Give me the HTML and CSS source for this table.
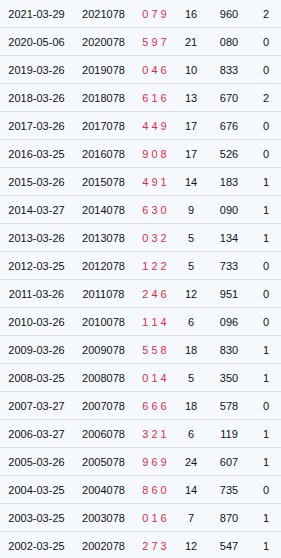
FILE: index.html
```html
<!DOCTYPE html>
<html>
<head>
<meta charset="utf-8">
<link rel="stylesheet" href="styles.css">
</head>
<body>
<div class="list">
  <div class="row"><span>2021-03-29</span><span>2021078</span><span class="balls">0 7 9</span><span>16</span><span>960</span><span>2</span></div>
  <div class="row"><span>2020-05-06</span><span>2020078</span><span class="balls">5 9 7</span><span>21</span><span>080</span><span>0</span></div>
  <div class="row"><span>2019-03-26</span><span>2019078</span><span class="balls">0 4 6</span><span>10</span><span>833</span><span>0</span></div>
  <div class="row"><span>2018-03-26</span><span>2018078</span><span class="balls">6 1 6</span><span>13</span><span>670</span><span>2</span></div>
  <div class="row"><span>2017-03-26</span><span>2017078</span><span class="balls">4 4 9</span><span>17</span><span>676</span><span>0</span></div>
  <div class="row"><span>2016-03-25</span><span>2016078</span><span class="balls">9 0 8</span><span>17</span><span>526</span><span>0</span></div>
  <div class="row"><span>2015-03-26</span><span>2015078</span><span class="balls">4 9 1</span><span>14</span><span>183</span><span>1</span></div>
  <div class="row"><span>2014-03-27</span><span>2014078</span><span class="balls">6 3 0</span><span>9</span><span>090</span><span>1</span></div>
  <div class="row"><span>2013-03-26</span><span>2013078</span><span class="balls">0 3 2</span><span>5</span><span>134</span><span>1</span></div>
  <div class="row"><span>2012-03-25</span><span>2012078</span><span class="balls">1 2 2</span><span>5</span><span>733</span><span>0</span></div>
  <div class="row"><span>2011-03-26</span><span>2011078</span><span class="balls">2 4 6</span><span>12</span><span>951</span><span>0</span></div>
  <div class="row"><span>2010-03-26</span><span>2010078</span><span class="balls">1 1 4</span><span>6</span><span>096</span><span>0</span></div>
  <div class="row"><span>2009-03-26</span><span>2009078</span><span class="balls">5 5 8</span><span>18</span><span>830</span><span>1</span></div>
  <div class="row"><span>2008-03-25</span><span>2008078</span><span class="balls">0 1 4</span><span>5</span><span>350</span><span>1</span></div>
  <div class="row"><span>2007-03-27</span><span>2007078</span><span class="balls">6 6 6</span><span>18</span><span>578</span><span>0</span></div>
  <div class="row"><span>2006-03-27</span><span>2006078</span><span class="balls">3 2 1</span><span>6</span><span>119</span><span>1</span></div>
  <div class="row"><span>2005-03-26</span><span>2005078</span><span class="balls">9 6 9</span><span>24</span><span>607</span><span>1</span></div>
  <div class="row"><span>2004-03-25</span><span>2004078</span><span class="balls">8 6 0</span><span>14</span><span>735</span><span>0</span></div>
  <div class="row"><span>2003-03-25</span><span>2003078</span><span class="balls">0 1 6</span><span>7</span><span>870</span><span>1</span></div>
  <div class="row"><span>2002-03-25</span><span>2002078</span><span class="balls">2 7 3</span><span>12</span><span>547</span><span>1</span></div>
</div>
</body>
</html>
```
FILE: styles.css
```css
html, body {
  margin: 0;
  padding: 0;
  background: #f6faff;
}
body {
  font-family: "Liberation Sans", Arial, sans-serif;
  font-size: 11px;
  color: #111111;
}
.list {
  display: flex;
  flex-direction: column;
}
.row {
  display: grid;
  grid-template-columns: 73px 61px 41px 32px 44px 30px;
  height: 27px;
  align-items: center;
  border-bottom: 1px solid #dedede;
}
.row span {
  text-align: center;
  white-space: pre;
}
.row .balls {
  color: #e42c46;
}
```
